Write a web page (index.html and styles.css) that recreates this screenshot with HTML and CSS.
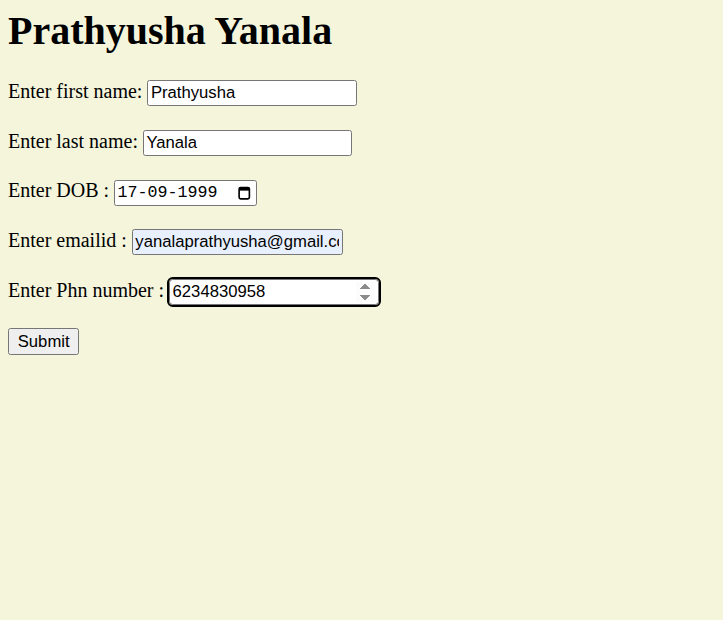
FILE: index.html
```html
<!DOCTYPE html>
<html>
<head>
<meta charset="utf-8">
<link rel="stylesheet" href="styles.css">
</head>
<body class="page">
<h1 class="title">Prathyusha Yanala</h1>
<form class="form">
<label>Enter first name:</label> <input class="field" type="text" value="Prathyusha"><br><br>
<label>Enter last name:</label> <input class="field" type="text" value="Yanala"><br><br>
<label>Enter DOB :</label> <span class="date-box"><input class="date-text" type="text" value="17-09-1999"><svg class="cal" viewBox="0 0 12 14" width="10" height="11.5"><rect x="1" y="1.5" width="10" height="11" rx="1.5" fill="none" stroke="#000" stroke-width="1.6"/><rect x="1" y="1.5" width="10" height="3" fill="#000"/></svg></span><br><br>
<label>Enter emailid :</label> <input class="field email" type="email" value="yanalaprathyusha@gmail.com"><br><br>
<label>Enter Phn number :</label> <input class="field phone" type="number" value="6234830958" autofocus><br><br>
<input class="btn" type="submit" value="Submit">
</form>
</body>
</html>
```
FILE: styles.css
```css
html {
  background: #f5f5dc;
}
.page {
  zoom: 1.25;
  font-family: "Liberation Serif", serif;
  margin: 0 6.4px 6.4px 6.4px;
}
.title {
  font-family: "Liberation Serif", serif;
  font-size: 32px;
  margin: 5.2px 0 21.44px 0;
}
.form {
  line-height: 1.18;
}
.field, .btn {
  font-family: "Liberation Sans", Arial, sans-serif;
  font-size: 13.333px;
}
.field {
  border: 1px solid #767676;
  border-radius: 2px;
  padding: 1.5px 2px;
  background: #fff;
  width: 162px;
}
.email {
  background: #e8f0fe;
  width: 163px;
}
.phone:focus {
  outline: 1.6px solid #000;
  outline-offset: 0;
  border-radius: 3px;
}
.date-box {
  display: inline-flex;
  align-items: center;
  justify-content: space-between;
  border: 1px solid #767676;
  border-radius: 2px;
  background: #fff;
  padding: 1px 4.5px 1px 2px;
  width: 114.5px;
  box-sizing: border-box;
}
.date-text {
  border: none;
  outline: none;
  background: transparent;
  padding: 0;
  width: 88px;
  font-family: "Liberation Mono", monospace;
  font-size: 13.333px;
  line-height: 17px;
  height: 17px;
}
.btn {
  border: 1px solid #767676;
  border-radius: 2px;
  background: #efefef;
  padding: 2px 7px;
  line-height: normal;
}
```
